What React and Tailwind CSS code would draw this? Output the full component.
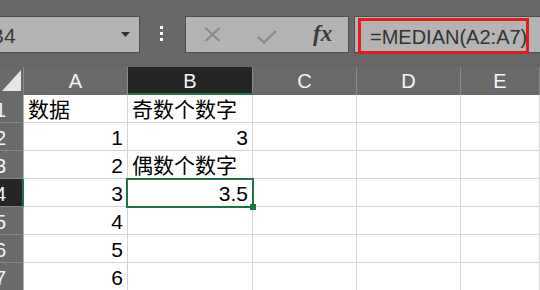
import React from "react";

const font = { fontFamily: '"Liberation Sans", "Noto Sans CJK SC", sans-serif' };

const rows = [
  { a: "数据", aAlign: "left", b: "奇数个数字", bAlign: "left" },
  { a: "1", aAlign: "right", b: "3", bAlign: "right" },
  { a: "2", aAlign: "right", b: "偶数个数字", bAlign: "left" },
  { a: "3", aAlign: "right", b: "3.5", bAlign: "right" },
  { a: "4", aAlign: "right", b: "", bAlign: "left" },
  { a: "5", aAlign: "right", b: "", bAlign: "left" },
  { a: "6", aAlign: "right", b: "", bAlign: "left" },
];

function Cell({ text, align, children, className = "" }) {
  return (
    <div
      className={`relative flex items-end bg-white border-r border-b border-[#d4d4d4] text-[21px] leading-[24px] text-black ${
        align === "right" ? "justify-end pr-[4px]" : "justify-start pl-[4px]"
      } ${className}`}
    >
      <span className="whitespace-nowrap">{text}</span>
      {children}
    </div>
  );
}

export default function App() {
  return (
    <div className="w-[540px] h-[290px] overflow-hidden bg-[#686868]" style={font}>
      {/* Toolbar */}
      <div className="h-[67px] flex items-start pt-[16px] bg-[#686868]">
        <div className="-ml-[1px] w-[141px] h-[37px] bg-[#b4b4b4] border border-[#4e4e4e] flex items-center overflow-hidden relative">
          <span className="-ml-[10px] text-[21px] leading-none text-[#3a3a3a] mt-[2px]">B4</span>
          <svg className="absolute left-[121px] top-[15px]" width="9" height="5" viewBox="0 0 9 5">
            <polygon points="0,0 9,0 4.5,5" fill="#333" />
          </svg>
        </div>
        <div className="ml-[20px] mt-[10px] flex flex-col gap-[3px]">
          <div className="w-[3px] h-[3px] bg-white" />
          <div className="w-[3px] h-[3px] bg-white" />
          <div className="w-[3px] h-[3px] bg-white" />
        </div>
        <div className="ml-[22px] w-[164px] h-[37px] bg-[#b4b4b4] border border-[#4e4e4e] flex items-center">
          <svg className="ml-[18px]" width="17" height="15" viewBox="0 0 17 15">
            <path d="M1.5 1 L15.5 14 M15.5 1 L1.5 14" stroke="#8a8a8a" strokeWidth="2.2" fill="none" />
          </svg>
          <svg className="ml-[36px] mt-[4px]" width="20" height="14" viewBox="0 0 20 14">
            <path d="M1 7 L7 12.5 L19 1" stroke="#8a8a8a" strokeWidth="2.4" fill="none" />
          </svg>
          <span
            className="ml-[36px] -mt-[2px] text-[23px] leading-none italic font-bold text-[#3a3a3a]"
            style={{ fontFamily: '"Liberation Serif", serif' }}
          >
            fx
          </span>
        </div>
        <div className="ml-[5px] flex-1 -mr-[10px] h-[37px] bg-[#b4b4b4] border border-[#4e4e4e] relative">
          <div className="absolute left-[3px] top-[1px] w-[171px] h-[36px] border-[3px] border-[#e31c1c] flex items-center pl-[9px]">
            <span className="text-[20px] leading-none text-[#333] whitespace-nowrap mt-[1px]">=MEDIAN(A2:A7)</span>
          </div>
        </div>
      </div>

      {/* Sheet grid */}
      <div className="grid grid-cols-[24px_104px_125px_104px_104px_1fr] auto-rows-[28px]">
        {/* Header row */}
        <div className="bg-[#6a6a6a] border-r border-[#8a8a8a] relative">
          <svg className="absolute left-[2px] top-[3px]" width="19" height="21" viewBox="0 0 19 21">
            <polygon points="19,0 19,21 0,21" fill="#e6e6e6" />
          </svg>
        </div>
        {["A", "B", "C", "D", "E"].map((l) => (
          <div
            key={l}
            className={`flex items-end justify-center text-[20px] leading-[24px] text-[#f4f4f4] border-r ${
              l === "B"
                ? "bg-[#252525] border-[#8a8a8a] border-b-2 border-b-[#217346]"
                : "bg-[#6a6a6a] border-[#8a8a8a] pb-[2px]"
            }`}
          >
            {l}
          </div>
        ))}

        {rows.map((r, i) => (
          <React.Fragment key={i}>
            <div
              className={`flex items-end overflow-hidden text-[20px] leading-[24px] text-[#f4f4f4] border-b border-[#858585] ${
                i === 3 ? "bg-[#252525] border-r-2 border-r-[#217346]" : "bg-[#6a6a6a] border-r border-r-[#b0b0b0]"
              }`}
            >
              <span className="-ml-[5px]">{i + 1}</span>
            </div>
            <Cell text={r.a} align={r.aAlign} />
            <Cell text={r.b} align={r.bAlign} className={i === 3 ? "z-10" : ""}>
              {i === 3 && (
                <div className="absolute -left-[2px] -top-[1px] w-[128px] h-[30px] border-2 border-[#217346]">
                  <div className="absolute -right-[4px] -bottom-[4px] w-[6px] h-[6px] bg-[#217346]" />
                </div>
              )}
            </Cell>
            <Cell text="" align="left" />
            <Cell text="" align="left" />
            <Cell text="" align="left" />
          </React.Fragment>
        ))}
      </div>
    </div>
  );
}
